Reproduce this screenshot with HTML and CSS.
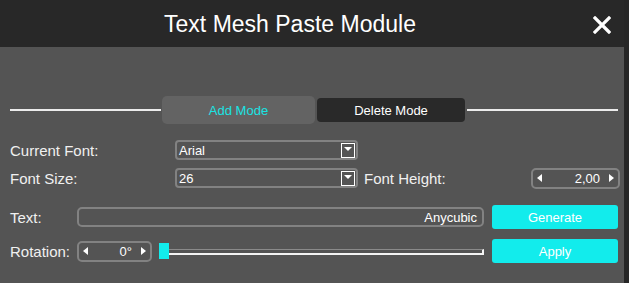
FILE: index.html
```html
<!DOCTYPE html>
<html>
<head>
	<meta charset="utf-8">
	<title>Text Mesh Paste Module</title>
	<link rel="stylesheet" href="styles.css">
</head>
<body>

<div class="window">
	<div class="titlebar">
		<div class="title">Text Mesh Paste Module</div>
		<a href="#" class="close">
			<svg width="18" height="18" viewBox="0 0 18 18"><path d="M2 2 L16 16 M16 2 L2 16" stroke="#fff" stroke-width="3.2" stroke-linecap="square"/></svg>
		</a>
	</div>

	<div class="panel">
		<div class="modes">
			<span class="rule"></span>
			<a href="#" class="mode active">Add Mode</a>
			<a href="#" class="mode">Delete Mode</a>
			<span class="rule"></span>
		</div>

		<div class="row">
			<label class="lbl wide">Current Font:</label>
			<div class="select"><span class="val">Arial</span><span class="arrow"></span></div>
		</div>

		<div class="row">
			<label class="lbl wide">Font Size:</label>
			<div class="select"><span class="val">26</span><span class="arrow"></span></div>
			<label class="lbl grow">Font Height:</label>
			<div class="spin height"><span class="tri left"></span><span class="num">2,00</span><span class="tri right"></span></div>
		</div>

		<div class="row tall">
			<label class="lbl short">Text:</label>
			<div class="input">Anycubic</div>
			<a href="#" class="btn">Generate</a>
		</div>

		<div class="row tall">
			<label class="lbl short">Rotation:</label>
			<div class="spin rot"><span class="tri left"></span><span class="num">0°</span><span class="tri right"></span></div>
			<div class="slider"><span class="handle"></span><span class="track"></span></div>
			<a href="#" class="btn">Apply</a>
		</div>
	</div>
</div>

</body>
</html>
```

FILE: styles.css
```css
body {
	margin: 0;
	background: #262626;
	font-family: "Liberation Sans", Arial, sans-serif;
	color: #f2f2f2;
}
a {
	text-decoration: none;
}
.window {
	width: 624px;
	height: 283px;
	background: #545454;
}
.titlebar {
	display: flex;
	align-items: center;
	height: 47px;
	background: #282828;
}
.title {
	flex: 1;
	padding-top: 1px;
	font-size: 23px;
	text-align: center;
	color: #fff;
}
.close {
	display: flex;
	justify-content: center;
	width: 44px;
	padding-top: 2px;
}
.panel {
	padding: 0 4px 0 10px;
}
.modes {
	display: flex;
	align-items: center;
	height: 28px;
	margin: 49px 2px 0 0;
}
.rule {
	flex: 1;
	height: 2px;
	background: #ececec;
}
.mode {
	display: flex;
	align-items: center;
	justify-content: center;
	width: 148px;
	height: 24px;
	margin-left: 2px;
	font-size: 13px;
	color: #fff;
	background: #292929;
	border-radius: 4px;
}
.mode.active {
	width: 153px;
	height: 28px;
	margin-left: 1px;
	color: #19e3e3;
	background: #636363;
	border-radius: 5px;
}
.mode + .rule {
	margin-left: 2px;
}
.row {
	display: flex;
	align-items: center;
	height: 20px;
	margin-top: 16px;
}
.row + .row {
	margin-top: 8px;
}
.row.tall {
	height: 24px;
	margin-top: 17px;
}
.row.tall + .row.tall {
	margin-top: 10px;
}
.lbl {
	font-size: 15px;
	color: #f0f0f0;
}
.lbl.wide {
	width: 165px;
}
.lbl.short {
	width: 67px;
}
.lbl.grow {
	flex: 1;
	margin-left: 6px;
}
.select {
	display: flex;
	align-items: center;
	box-sizing: border-box;
	width: 183px;
	height: 20px;
	padding: 0 1px 0 2px;
	border: 2px solid #828282;
	border-radius: 4px;
}
.select .val {
	flex: 1;
	font-size: 13px;
	color: #fff;
}
.select .arrow {
	position: relative;
	box-sizing: border-box;
	width: 14px;
	height: 15px;
	border: 1px solid #fff;
}
.select .arrow::after {
	content: "";
	position: absolute;
	top: 3px;
	left: 2px;
	border-left: 4px solid transparent;
	border-right: 4px solid transparent;
	border-top: 4px solid #fff;
}
.spin {
	display: flex;
	align-items: center;
	box-sizing: border-box;
	height: 21px;
	padding: 0 4px;
	border: 2px solid #828282;
	border-radius: 5px;
}
.spin.height {
	width: 89px;
}
.spin.rot {
	width: 75px;
}
.spin .num {
	flex: 1;
	margin-right: 9px;
	font-size: 13px;
	text-align: right;
	color: #fff;
}
.tri {
	width: 0;
	height: 0;
	border-top: 4px solid transparent;
	border-bottom: 4px solid transparent;
}
.tri.left {
	border-right: 5px solid #fff;
}
.tri.right {
	border-left: 5px solid #fff;
}
.input {
	flex: 1;
	box-sizing: border-box;
	height: 20px;
	padding: 1px 5px 0;
	font-size: 13px;
	line-height: 15px;
	text-align: right;
	color: #fff;
	border: 2px solid #828282;
	border-radius: 5px;
}
.btn {
	display: flex;
	align-items: center;
	justify-content: center;
	width: 126px;
	height: 24px;
	margin: 0 2px 0 8px;
	font-size: 13px;
	color: #fff;
	background: #12ecec;
	border-radius: 3px;
}
.slider {
	flex: 1;
	display: flex;
	align-items: center;
	margin-left: 7px;
}
.handle {
	width: 10px;
	height: 16px;
	background: #12ecec;
}
.track {
	flex: 1;
	box-sizing: border-box;
	height: 6px;
	margin-top: 1px;
	border-top: 1px solid #8a8a8a;
	border-bottom: 2px solid #f4f4f4;
	border-right: 2px solid #f4f4f4;
}
```
